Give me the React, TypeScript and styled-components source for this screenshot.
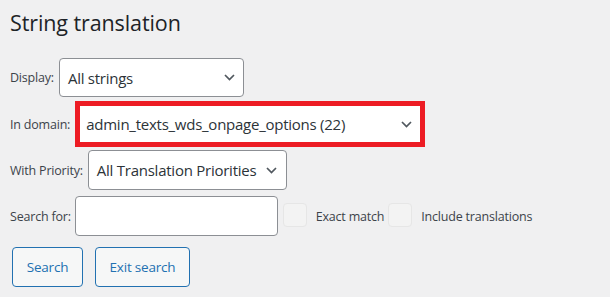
import React from "react";
import styled, { createGlobalStyle } from "styled-components";

const Global = createGlobalStyle`
  html, body { margin: 0; padding: 0; background: #f0f0f1; }
  body { font-family: "Open Sans", "Noto Sans", sans-serif; color: #1d2327; }
`;

const Page = styled.div`
  width: 610px;
  height: 297px;
  box-sizing: border-box;
  padding: 5px 0 0 10px;
  overflow: hidden;
`;

const Title = styled.h1`
  margin: 0;
  font-size: 21.5px;
  font-weight: 400;
  line-height: 36px;
  color: #1d2327;
  letter-spacing: -0.1px;
`;

const Row = styled.div<{ $top: number }>`
  display: flex;
  align-items: center;
  margin-top: ${(p) => p.$top}px;
`;

const Label = styled.span<{ $gap: number }>`
  font-size: 12.5px;
  color: #3c434a;
  margin-right: ${(p) => p.$gap}px;
  letter-spacing: -0.2px;
`;

const SelectBox = styled.div<{ $w: number; $h: number; $padL: number; $padR: number; $bare?: boolean }>`
  box-sizing: border-box;
  width: ${(p) => p.$w}px;
  height: ${(p) => p.$h}px;
  display: flex;
  align-items: center;
  justify-content: space-between;
  padding: 0 ${(p) => p.$padR}px 0 ${(p) => p.$padL}px;
  background: #fff;
  border: ${(p) => (p.$bare ? "none" : "1px solid #8c8f94")};
  border-radius: ${(p) => (p.$bare ? "0" : "4px")};
  font-size: 15px;
  color: #2c3338;
  letter-spacing: -0.25px;
  white-space: nowrap;
`;

const Highlight = styled.div`
  border: 5px solid #ed1c24;
  display: flex;
`;

const Chevron = () => (
  <svg width="11" height="7" viewBox="0 0 11 7" fill="none">
    <path d="M1 1L5.5 5.5L10 1" stroke="#50575e" strokeWidth="1.7" />
  </svg>
);

const TextInput = styled.div`
  box-sizing: border-box;
  width: 203px;
  height: 40px;
  background: #fff;
  border: 1px solid #8c8f94;
  border-radius: 4px;
`;

const Checkbox = styled.span<{ $ml: number }>`
  box-sizing: border-box;
  width: 24px;
  height: 24px;
  margin-left: ${(p) => p.$ml}px;
  margin-top: -2px;
  background: #f3f3f3;
  border: 1px solid #e6e6e6;
  border-radius: 4px;
`;

const CheckLabel = styled.span`
  font-size: 12.5px;
  color: #3c434a;
  margin-left: 9px;
  letter-spacing: -0.2px;
`;

const Button = styled.div<{ $w: number; $ml: number; $dy: number }>`
  box-sizing: border-box;
  width: ${(p) => p.$w}px;
  height: 40px;
  margin-left: ${(p) => p.$ml}px;
  margin-top: ${(p) => p.$dy}px;
  display: flex;
  align-items: center;
  justify-content: center;
  background: #f6f7f7;
  border: 1px solid #2271b1;
  border-radius: 4px;
  color: #2271b1;
  font-size: 13.5px;
  letter-spacing: -0.2px;
`;

export default function App() {
  return (
    <>
      <Global />
      <Page>
        <Title>String translation</Title>
        <Row $top={17}>
          <Label $gap={5}>Display:</Label>
          <SelectBox $w={185} $h={39} $padL={8} $padR={8}>
            All strings
            <Chevron />
          </SelectBox>
        </Row>
        <Row $top={4}>
          <Label $gap={5}>In domain:</Label>
          <Highlight>
            <SelectBox $w={340} $h={36} $padL={6} $padR={8} $bare>
              admin_texts_wds_onpage_options (22)
              <Chevron />
            </SelectBox>
          </Highlight>
        </Row>
        <Row $top={3}>
          <Label $gap={5}>With Priority:</Label>
          <SelectBox $w={199} $h={40} $padL={8} $padR={9}>
            All Translation Priorities
            <Chevron />
          </SelectBox>
        </Row>
        <Row $top={6}>
          <Label $gap={4}>Search for:</Label>
          <TextInput />
          <Checkbox $ml={5} />
          <CheckLabel>Exact match</CheckLabel>
          <Checkbox $ml={4} />
          <CheckLabel>Include translations</CheckLabel>
        </Row>
        <Row $top={10}>
          <Button $w={71} $ml={2} $dy={1}>Search</Button>
          <Button $w={95} $ml={12} $dy={0}>Exit search</Button>
        </Row>
      </Page>
    </>
  );
}
